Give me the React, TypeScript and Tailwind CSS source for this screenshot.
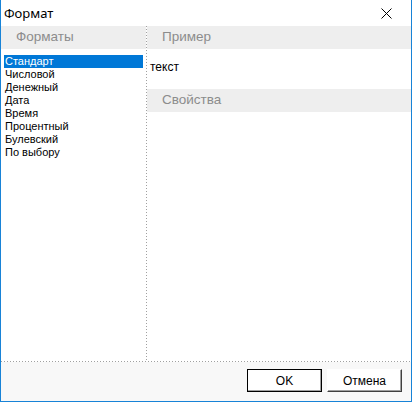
const formats = [
  "Стандарт",
  "Числовой",
  "Денежный",
  "Дата",
  "Время",
  "Процентный",
  "Булевский",
  "По выбору",
];

function SectionHeader({ title }: { title: string }) {
  return (
    <div className="h-[23px] bg-[#eeeeee] pl-[15px] flex items-center text-[13.5px] text-[#8c8c8c] font-['Liberation_Sans',Arial,sans-serif]">
      {title}
    </div>
  );
}

export default function App() {
  const selected = 0;

  return (
    <div className="w-[412px] h-[402px] flex flex-col bg-white border-x border-b border-[#1883d7] overflow-hidden select-none">
      {/* title bar */}
      <div className="h-[26px] flex items-center justify-between pl-[3px] shrink-0">
        <span className="text-[13px] text-black font-['Noto_Sans',sans-serif] leading-none">Формат</span>
        <div className="w-[45px] h-[26px] flex items-center justify-center">
          <svg width="11" height="11" viewBox="0 0 11 11" className="-ml-[4px]">
            <path d="M0.5 0.5 L10.5 10.5 M10.5 0.5 L0.5 10.5" stroke="#000" strokeWidth="1" fill="none" />
          </svg>
        </div>
      </div>

      {/* body */}
      <div className="flex flex-1 min-h-0">
        <div className="w-[145px] flex flex-col">
          <SectionHeader title="Форматы" />
          <ul className="pt-[6px] px-[3px] font-['Liberation_Sans',Arial,sans-serif] text-[11px] leading-[13px]">
            {formats.map((f, i) => (
              <li
                key={f}
                className={
                  i === selected
                    ? "h-[13px] pl-[1px] bg-[#0078d7] text-white"
                    : "h-[13px] pl-[1px] text-black"
                }
              >
                {f}
              </li>
            ))}
          </ul>
        </div>
        <div className="w-px bg-[repeating-linear-gradient(to_bottom,#a0a0a0_0px,#a0a0a0_1px,transparent_1px,transparent_3px)]" />
        <div className="flex-1 flex flex-col">
          <SectionHeader title="Пример" />
          <div className="h-[40px] pl-[3px] pt-[11px] text-[12px] leading-[14px] text-black font-['Liberation_Sans',Arial,sans-serif]">
            текст
          </div>
          <SectionHeader title="Свойства" />
        </div>
      </div>

      {/* separator */}
      <div className="h-px shrink-0 bg-[repeating-linear-gradient(to_right,#a0a0a0_0px,#a0a0a0_1px,transparent_1px,transparent_3px)]" />

      {/* footer */}
      <div className="h-[39px] shrink-0 bg-[#f8f8f8] flex justify-end items-start pt-[7px] pr-[9px] gap-[5px] font-['Liberation_Sans',Arial,sans-serif] text-[12px] text-black">
        <button className="w-[75px] h-[23px] bg-white border border-black shadow-[inset_-1px_-1px_0_#a0a0a0] flex items-center justify-center">
          OK
        </button>
        <button className="w-[75px] h-[23px] bg-white border-t border-l border-t-white border-l-white border-r border-b border-r-[#404040] border-b-[#404040] shadow-[inset_-1px_-1px_0_#a0a0a0] flex items-center justify-center">
          Отмена
        </button>
      </div>
    </div>
  );
}
